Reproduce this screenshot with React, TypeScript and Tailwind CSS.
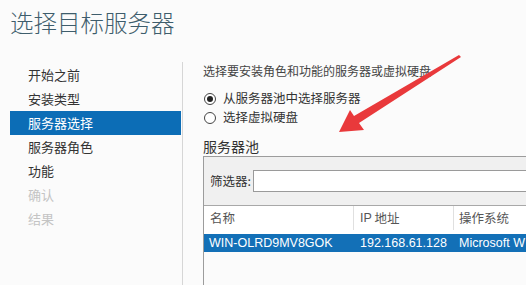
import React from "react";

const cjk = { fontFamily: '"Microsoft YaHei", "Noto Sans CJK SC", "Noto Sans", sans-serif' };
const latin = { fontFamily: '"Liberation Sans", "Noto Sans CJK SC", sans-serif' };

function Radio({ checked }: { checked?: boolean }) {
  return (
    <span className="w-[12px] h-[12px] rounded-full border border-[#444] bg-white flex items-center justify-center shrink-0">
      {checked && <span className="w-[6px] h-[6px] rounded-full bg-[#222]" />}
    </span>
  );
}

export default function App() {
  const nav = [
    { t: "开始之前" },
    { t: "安装类型" },
    { t: "服务器选择", sel: true },
    { t: "服务器角色" },
    { t: "功能" },
    { t: "确认", dim: true },
    { t: "结果", dim: true },
  ];
  return (
    <div className="relative w-[526px] h-[285px] overflow-hidden bg-[#fbfbfb] text-[#333]" style={cjk}>
      <div className="pl-[10px] pt-[6px] h-[62px] text-[23.5px] leading-[32px] font-light text-[#3e5d6c]">选择目标服务器</div>
      <div className="flex h-[223px]">
        <div className="w-[183px] border-r border-[#d6d6d6] pl-[10px] pt-[1px] shrink-0">
          {nav.map((n) => (
            <div
              key={n.t}
              className={`h-[24px] pl-[18px] flex items-center text-[13px] ${
                n.sel ? "bg-[#0c6db6] text-white mr-[1px]" : n.dim ? "text-[#c4c4c4]" : "text-[#333]"
              }`}
            >
              {n.t}
            </div>
          ))}
        </div>
        <div className="pl-[20px] flex-1 min-w-0">
          <div className="text-[12px] leading-[18px] text-[#444]">选择要安装角色和功能的服务器或虚拟硬盘</div>
          <div className="mt-[9px] flex flex-col">
            <div className="h-[19px] flex items-center gap-[7px] text-[12.5px] pl-[1px]">
              <Radio checked />
              <span>从服务器池中选择服务器</span>
            </div>
            <div className="h-[19px] flex items-center gap-[7px] text-[12.5px] pl-[1px]">
              <Radio />
              <span>选择虚拟硬盘</span>
            </div>
          </div>
          <div className="mt-[10px] h-[19px] text-[14px] leading-[19px] text-[#333]">服务器池</div>
          <div className="border-l border-t border-[#9c9c9c] h-[200px] overflow-hidden">
            <div className="bg-[#f0f0f0] h-[49px] flex items-center pl-[6px] border-b border-[#a8a8a8]">
              <span className="text-[12.5px] text-[#333] w-[43px] shrink-0">筛选器:</span>
              <div className="flex-1 h-[22px] bg-white border border-[#9a9a9a] border-r-0" />
            </div>
            <div className="bg-white">
              <div className="flex h-[28px] text-[12.5px] text-[#555]">
                <div className="w-[150px] shrink-0 pl-[6px] flex items-center border-r border-[#e0e0e0] h-[24px]">名称</div>
                <div className="w-[100px] shrink-0 pl-[6px] flex items-center border-r border-[#e0e0e0] h-[24px]">
                  <span style={latin}>IP</span>&nbsp;地址
                </div>
                <div className="pl-[5px] flex items-center h-[24px]">操作系统</div>
              </div>
              <div className="flex h-[18px] bg-[#1370b7] text-white text-[12.5px] whitespace-nowrap" style={latin}>
                <div className="w-[150px] shrink-0 pl-[5px] flex items-center">WIN-OLRD9MV8GOK</div>
                <div className="w-[100px] shrink-0 pl-[6px] flex items-center">192.168.61.128</div>
                <div className="pl-[5px] shrink-0 flex items-center">Microsoft W</div>
              </div>
            </div>
          </div>
        </div>
      </div>
      <svg className="absolute left-0 top-0 pointer-events-none" width="526" height="285">
        <polygon
          points="339,132 364,130 359,123 461,57 459,55 354,116 350,110"
          fill="#e9393b"
        />
      </svg>
    </div>
  );
}
